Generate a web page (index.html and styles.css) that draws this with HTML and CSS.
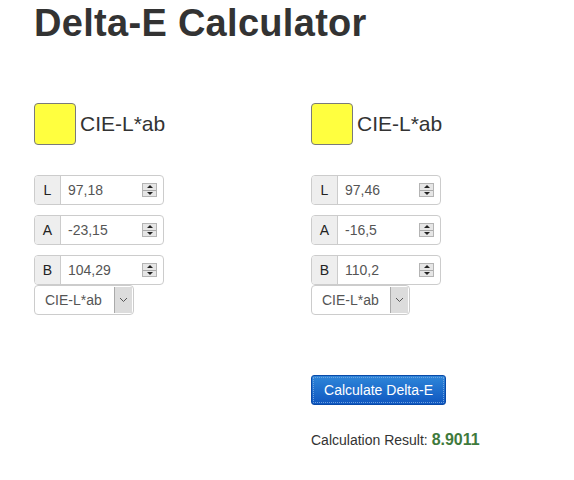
FILE: index.html
```html
<!DOCTYPE html>
<html>
<head>
<meta charset="utf-8">
<link rel="stylesheet" href="styles.css">
</head>
<body>
<div class="page">
  <h1 class="title">Delta-E Calculator</h1>
  <div class="columns">
    <div class="col col-left">
      <div class="swatch-row">
        <div class="swatch"></div>
        <span class="space-name">CIE-L*ab</span>
      </div>
      <div class="fields">
        <div class="group"><span class="addon">L</span><span class="value">97,18</span><span class="spin"><i class="up"></i><i class="down"></i></span></div>
        <div class="group"><span class="addon">A</span><span class="value">-23,15</span><span class="spin"><i class="up"></i><i class="down"></i></span></div>
        <div class="group"><span class="addon">B</span><span class="value">104,29</span><span class="spin"><i class="up"></i><i class="down"></i></span></div>
      </div>
      <div class="select"><span class="select-text">CIE-L*ab</span><span class="select-btn"><svg width="9" height="6" viewBox="0 0 9 6"><path d="M1 1 L4.5 4.5 L8 1" fill="none" stroke="#555" stroke-width="1"/></svg></span></div>
    </div>
    <div class="col col-right">
      <div class="swatch-row">
        <div class="swatch"></div>
        <span class="space-name">CIE-L*ab</span>
      </div>
      <div class="fields">
        <div class="group"><span class="addon">L</span><span class="value">97,46</span><span class="spin"><i class="up"></i><i class="down"></i></span></div>
        <div class="group"><span class="addon">A</span><span class="value">-16,5</span><span class="spin"><i class="up"></i><i class="down"></i></span></div>
        <div class="group"><span class="addon">B</span><span class="value">110,2</span><span class="spin"><i class="up"></i><i class="down"></i></span></div>
      </div>
      <div class="select select-narrow"><span class="select-text">CIE-L*ab</span><span class="select-btn"><svg width="9" height="6" viewBox="0 0 9 6"><path d="M1 1 L4.5 4.5 L8 1" fill="none" stroke="#555" stroke-width="1"/></svg></span></div>
      <button class="calc-btn">Calculate Delta-E</button>
      <div class="result">Calculation Result: <strong class="result-value">8.9011</strong></div>
    </div>
  </div>
</div>
</body>
</html>
```
FILE: styles.css
```css
html, body {
  margin: 0;
  padding: 0;
  background: #fff;
}
body {
  font-family: "Liberation Sans", Arial, sans-serif;
  color: #333;
}
.page {
  padding: 3px 0 0 34px;
}
.title {
  margin: 0;
  font-size: 38px;
  line-height: 40px;
  letter-spacing: 0.3px;
  font-weight: bold;
  color: #333;
}
.columns {
  display: flex;
  margin-top: 60px;
}
.col {
  display: flex;
  flex-direction: column;
  align-items: flex-start;
}
.col-left {
  width: 277px;
}
.swatch-row {
  display: flex;
  align-items: center;
  gap: 4px;
}
.swatch {
  width: 40px;
  height: 40px;
  background: #ffff3f;
  border: 1px solid #7a7a7a;
  border-radius: 4px;
}
.space-name {
  font-size: 21px;
  line-height: 24px;
  color: #333;
}
.fields {
  margin-top: 30px;
  display: flex;
  flex-direction: column;
  gap: 10px;
}
.group {
  display: flex;
  align-items: center;
  width: 130px;
  height: 30px;
  box-sizing: border-box;
  border: 1px solid #ccc;
  border-radius: 4px;
  font-size: 14px;
}
.addon {
  width: 26px;
  height: 100%;
  box-sizing: border-box;
  background: #eee;
  border-right: 1px solid #ccc;
  border-radius: 3px 0 0 3px;
  color: #222;
  display: flex;
  align-items: center;
  justify-content: center;
  font-size: 14px;
}
.value {
  flex: 1;
  padding-left: 7px;
  color: #555;
}
.spin {
  width: 15px;
  height: 14px;
  box-sizing: border-box;
  margin-right: 6px;
  border: 1px solid #b4b4b4;
  background: #e6e6e6;
  display: flex;
  flex-direction: column;
}
.spin i {
  flex: 1;
  display: flex;
  align-items: center;
  justify-content: center;
}
.spin .up {
  border-bottom: 1px solid #aaa;
}
.spin .up::before {
  content: "";
  border-left: 3px solid transparent;
  border-right: 3px solid transparent;
  border-bottom: 3px solid #222;
}
.spin .down::before {
  content: "";
  border-left: 3px solid transparent;
  border-right: 3px solid transparent;
  border-top: 3px solid #222;
}
.select {
  display: flex;
  align-items: stretch;
  width: 100px;
  height: 30px;
  box-sizing: border-box;
  border: 1px solid #ccc;
  border-radius: 4px;
  font-size: 14px;
  color: #555;
}
.select-narrow {
  width: 99px;
}
.select-text {
  flex: 1;
  display: flex;
  align-items: center;
  padding-left: 10px;
}
.select-btn {
  width: 17px;
  margin: 1px 1px 1px 0;
  background: #dcdcdc;
  border-left: 1px solid #aaa;
  display: flex;
  align-items: center;
  justify-content: center;
}
.calc-btn {
  margin-top: 60px;
  width: 135px;
  height: 30px;
  box-sizing: border-box;
  border: 1px solid #0a4aa8;
  border-radius: 3px;
  background: linear-gradient(#2e86d9, #0f57c0);
  color: #fff;
  font-family: "Liberation Sans", Arial, sans-serif;
  font-size: 14px;
  padding: 0;
  outline: 1px dotted #6fa0dd;
  outline-offset: -3px;
}
.result {
  margin-top: 25px;
  font-size: 14px;
  line-height: 20px;
  color: #333;
}
.result-value {
  font-size: 16px;
  color: #3f7a3c;
}
```
